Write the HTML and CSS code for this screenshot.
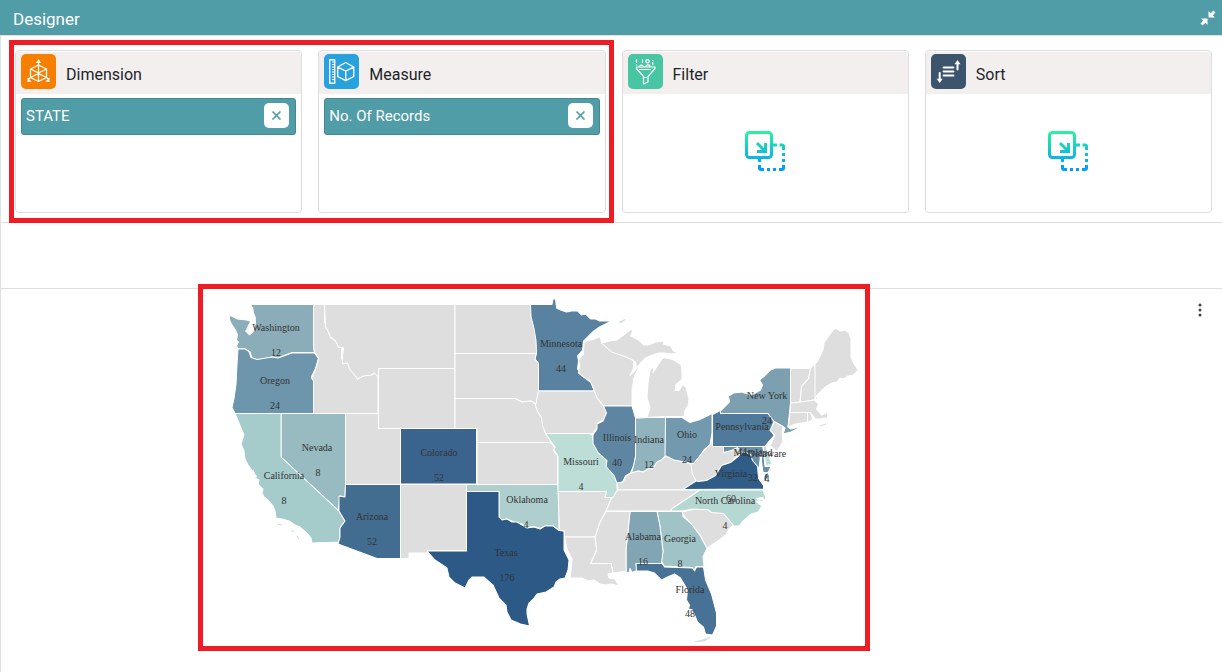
FILE: index.html
```html
<!DOCTYPE html>
<html lang="en">
<head>
<meta charset="utf-8">
<meta name="viewport" content="width=device-width, initial-scale=1">
<title>Designer</title>
<link rel="stylesheet" href="styles.css">
</head>
<body>
<header class="topbar">
  <h1 class="topbar-title">Designer</h1>
  <button class="topbar-btn" type="button" aria-label="Exit full screen">
    <svg width="16" height="16" viewBox="0 0 16 16"><g fill="#fff"><path d="M8.500 7.500V1l2.200 2.200L13.500 .500 15.500 2.500 12.800 5.300 15 7.500z"/><path d="M7.500 8.500V15L5.300 12.800 2.500 15.500 .500 13.500 3.200 10.700 1 8.500z"/></g></svg>
  </button>
</header>
<main class="page">
  <section class="shelves">
    <div class="marked">
      <article class="card">
        <div class="card-head">
          <svg class="card-icon" viewBox="0 0 35 35"><rect width="35" height="35" rx="5" fill="#f77f00"/><g fill="none" stroke="#fff" stroke-width="1.300" stroke-linejoin="round"><path d="M17.500 11l8 4v8.500l-8 4-8-4V15z"/><path d="M9.500 15l8 4 8-4M17.500 7v20.500M9.500 23.500l8-4 8 4"/><path d="M9.500 23.500L7 25.500M25.500 23.500l2.500 2"/></g><path d="M17.500 5l2.500 4h-5zM6.500 23.500v4.500l4-.500zM28.500 23.500v4.500l-4-.500z" fill="#fff"/></svg>
          <h2 class="card-title">Dimension</h2>
        </div>
        <div class="card-body">
          <div class="pill"><span>STATE</span><button class="pill-close" type="button" aria-label="Remove STATE"><svg width="11" height="11" viewBox="0 0 11 11"><path d="M1.500 1.500l8 8M9.500 1.500l-8 8" stroke="#509ca7" stroke-width="1.700"/></svg></button></div>
        </div>
      </article>
      <article class="card">
        <div class="card-head">
          <svg class="card-icon" viewBox="0 0 35 35"><rect width="35" height="35" rx="5" fill="#28a2dc"/><g fill="none" stroke="#fff" stroke-width="1.400" stroke-linejoin="round"><path d="M5.700 5.700h5v23.600h-5z"/><path d="M8 8h2.500M8 10.500h2.500M8 13h2.500M8 15.500h2.500M8 18h2.500M8 20.500h2.500M8 23h2.500M8 25.500h2.500" stroke-width="1.100"/><path d="M21.700 8.500l8 4.500v9.500l-8 4.200-8-4.200V13zM13.700 13l8 4.200 8-4.200M21.700 17.200v9.500"/></g></svg>
          <h2 class="card-title">Measure</h2>
        </div>
        <div class="card-body">
          <div class="pill"><span>No. Of Records</span><button class="pill-close" type="button" aria-label="Remove No. Of Records"><svg width="11" height="11" viewBox="0 0 11 11"><path d="M1.500 1.500l8 8M9.500 1.500l-8 8" stroke="#509ca7" stroke-width="1.700"/></svg></button></div>
        </div>
      </article>
    </div>
    <article class="card">
      <div class="card-head">
        <svg class="card-icon" viewBox="0 0 35 35"><rect width="35" height="35" rx="5" fill="#48c5a2"/><g fill="none" stroke="#fff" stroke-width="1.200" stroke-linejoin="round"><path d="M8.500 13h18.500v1.500L20 22.500v5.500l-4.500 2V22.500L8.500 14.500z"/><path d="M11 15.500h12M16 23.500h3"/><circle cx="19.500" cy="7.300" r="1.700"/><path d="M11.500 13a1.900 1.900 0 013.800 0M17.800 13a2.200 2.200 0 014.400 0M8.500 5v4M8.500 10.500v1M14.500 5.500V9M24.800 6v1M24.800 8v3"/></g></svg>
        <h2 class="card-title">Filter</h2>
      </div>
      <div class="card-body drop">
        <svg width="41" height="41" viewBox="0 0 41 41"><defs><linearGradient id="g1" gradientUnits="userSpaceOnUse" x1="0" y1="0" x2="0" y2="41"><stop offset="0" stop-color="#2af598"/><stop offset=".9" stop-color="#009efd"/></linearGradient></defs><g fill="none" stroke="url(#g1)" stroke-width="3"><rect x="1.500" y="1.500" width="25" height="25" rx="3"/><path d="M28 14h4M34.500 14H37q1.500 0 1.500 1.500V19M38.500 22v3M38.500 28v3M38.500 34v3q0 1.500-1.500 1.500H34M31 38.500h-3M25 38.500h-3M19 38.500h-3q-1.500 0-1.500-1.500V34M14.500 31v-3.500"/><path d="M12 12l7 7M20.500 12v8.500H12"/></g></svg>
      </div>
    </article>
    <article class="card">
      <div class="card-head">
        <svg class="card-icon" viewBox="0 0 35 35"><rect width="35" height="35" rx="5" fill="#3c556c"/><g fill="none" stroke="#fff" stroke-width="1.800" stroke-linecap="round"><path d="M12.500 13.500h10M12.500 17.500h10M12.500 21.500h10"/><path d="M26.500 15.500V9M8.700 19v7" stroke-width="2"/></g><path d="M26.500 6l3 4.200h-6zM8.700 29l-3-4.200h6z" fill="#fff"/></svg>
        <h2 class="card-title">Sort</h2>
      </div>
      <div class="card-body drop">
        <svg width="41" height="41" viewBox="0 0 41 41"><g fill="none" stroke="url(#g1)" stroke-width="3"><rect x="1.500" y="1.500" width="25" height="25" rx="3"/><path d="M28 14h4M34.500 14H37q1.500 0 1.500 1.500V19M38.500 22v3M38.500 28v3M38.500 34v3q0 1.500-1.500 1.500H34M31 38.500h-3M25 38.500h-3M19 38.500h-3q-1.500 0-1.500-1.500V34M14.500 31v-3.500"/><path d="M12 12l7 7M20.500 12v8.500H12"/></g></svg>
      </div>
    </article>
  </section>
  <section class="strip"></section>
  <section class="chart">
    <figure class="map-frame">
      <svg class="map" viewBox="203 289 662 357" role="img" aria-label="Number of records by state">
        <g class="states">
          <path fill="#8badb9" d="M251 304.500H313.500V346l1 6.500H292l-5 2-9 3.500-6-1-6 1.500-9 1.500-5-2-2-6-5-3h-7l-1.500-3 2-4-2-2 1-5-2-5-4-6-2-4v-5l8 4 9 1 4 1-1 6-4 4 4 4 4-4 2-9-3-8z"/>
          <path fill="#6d95ab" d="M238 349h7l4 2.500 2 6 6 2 9-1.500 6-1 6 1 14-5H314.500l4 5.500-3 10-4 8 2 3V413.500H235l-3-6 2-9 2-14 1-20z"/>
          <path d="M313.500 304.500h11V322l2 3 3 7 5 4 3 6 5 1-1 8v8l5-1 2 6 5 6 3 4 6-3 8-1 3-2 4.500 4V413.500H313.500V381l-2-3 4-8 3-12-4-5.500-1-6.500z"/>
          <path d="M324.500 304.500H455V368.500H378.500V377l-4-4-3 2-8 1-6 3-3-4-5-6-2-6-5 1v-8l1-8-5-1-3-6-5-4-3-7-2-3z"/>
          <path d="M378.500 368.500H455V428.500H378.500z"/>
          <path d="M345.500 413.500h33v15h22v56h-55z"/>
          <path fill="#3a648d" d="M400.500 428.500h76v55.500h-76z"/>
          <path fill="#98bac1" d="M281 413.500h64.500V484.500L345 497l-5-1-1.500 15L281 457z"/>
          <path fill="#a6cbcb" d="M235 413.500h46V457l58 54 6 10-5 7 0 9 1 5-29 1-1-5-4-5-7-6-5-2-6-4-7-2-6-1-1-7-2-5-4-5-5-4-2-4 1-4-5-5 1-4-4-2-1-5-6-8-3-6-1-8-3-7 3-9z"/>
          <path fill="#436c91" d="M345.500 484.500h55v74H377L338 544l2-7v-9l5-7-6-10v-15l6 1z"/>
          <path d="M400.500 484.500h66v66H428v2.500h-19v5.500h-8.500z"/>
          <path d="M455 304.500h75.500l1 12 3 12 2 12 .5 13H455z"/>
          <path d="M455 353.500h81.500l-1.500 5.500 3.500 4V391l-1 7-.5 7-6-4-9 1-7-3.500H455z"/>
          <path d="M455 398.500h60l7 3.500 9-1 6 4 3 7 3 5 1 8 3 8 4 9.500h-74v-14h-22z"/>
          <path d="M477 442.500h73.500l4 5-1 3 4 5.500V484.500H477z"/>
          <path fill="#aecfcd" d="M466.500 484.500h91.500l1 16V530l-6-4-8 0-5 2.500-6-2-7 1-5-3.500-5 0-5-3-5-2-5 1-3-3V491.500H466.500z"/>
          <path fill="#2c5985" d="M466.500 491.500H499V517l3 3 5-1 5 3 5 0 5 3 5 3 7-1 6 2 5-3h8l6 4.500 5 .500V550l5 10-1 10-3 8-5 1-4 3-2 5-8 5-9 2-3 4-5 5-2 6 0 5 2.500 12-9-2-9.500-4-4-8-1-7-7-7-6-13-9-8H472l-3 3-4 8-10-5-6-6-2-9-12-8-8-9h39.500z"/>
          <path fill="#5982a0" d="M530.500 304.500H552l1-5.500h2.500l1 9 4 2 6 2 5-1 6 0 4 4 4-1 5 5 5 0 4 2 12 0-12 6-7 5-9 9-1 9-5 6 1 5-1 8 5 4 7 5L594.500 391H538.500V363l-3.500-4 1.500-5.500-.5-13-2-12-3-12z"/>
          <path d="M538.500 391h56l2 6 4 5 5 4 1.500 6-3.500 8-6 3 0 4-5 6.500-47 0-3-8-1-8-4-6-2-6z"/>
          <path d="M584 341.500l9-2 7-3 2 7 9 4 12 4 7 3 4 7-1 8-3 6 5-5 8-15-5 13-4 9-2 12v16.500H603.500L597 398l-2.500-7-4-9-7-5-5-4 1-8-1-5 5-6z"/>
          <path d="M601.500 343l8-2 7-1 7-5 8-6 1 3-2 4 8 4 5 5 5 0 7-3 8-1 0 3 7 2 3 5 5 2-7 1-7-1-6 0-6 2-7 3-5 5-4 5-1-6-5-3-7-3-12-4z"/>
          <path d="M647 417.500l3-10-3-10 1-14 2-13 4-5-1 7 6-9 4-6 10 2 8 5 1 7 0 8-6 5-1 6 4 0 4-6 3 3 3 12-1 6-3 5-1 6H665z"/>
          <path fill="#5e86a3" d="M603.500 406H632l3.500 12V456l-2 10-3 7-5 3-3 6-6 2-3-8-8-9 1-6-9-8-5-9 .500-9 4-6v-5l6-3 3.500-8z"/>
          <path fill="#90b3bd" d="M635.500 418h4l8-.500H665.500V456l-5 5-4 2-3 5-5 1-5 3-5-1-7 2 2-7 2-9z"/>
          <path fill="#7299ad" d="M665.500 417.500H682l8 5 10-3 12-6V433l-2 12-6 5-5 8-6 6-10-2-10-2-8-4z"/>
          <path fill="#4f7a9b" d="M712.500 414.500l8-4v3H768l6 8-3 9 3 5-6 7-3 4H712.500z"/>
          <path fill="#7ca0b0" d="M720.500 411l9-9-1-6 5-3 8-1 10 3 9-5 2-5-3-5 5-4 6-6 5-2H790.500V403L788 427l3 2 12-3-12 6-8 2 2-6-11-6.500-6-8H720.500z"/>
          <path d="M774 421.500l9 5-1 6 1 9-6 10-7-6 5-10-5-5z"/>
          <path d="M790.500 368.500h20l-2 10-7 8-1.500 16H790.500z"/>
          <path d="M810.500 368.500l4.500-5 1.500 30 1 6-17.500 3 1.500-16 7-8z"/>
          <path d="M815 364l2-2 6-12 1-7 4-6 5-7 3-2 4 3 5-1 4 3 2 6 0 18 3 7 4 6-5 5-5 1-4 3-4-1-3 4-5 1-5 3-4 3-6 6-2 5z"/>
          <path d="M790.500 403l10-1 14-2 4 4-2 5 5 6 6-3 0 6-7 1-5 0-5-6H790z"/>
          <path d="M790 412.500h17.500V422l-12 2-7.500 3z"/><path d="M807.500 412.500l3 0 2.500 7-5.500 3z"/>
          <path fill="#6890a8" d="M723.500 446.500H763l2 20 6 0-3 6-5 0-2-14-3 12-5-8-6-9-7 0-5 4-3-6-9 4z"/>
          <path fill="#bcded7" d="M763 447l3-1 3 10 3 8-6 2z"/>
          <path d="M712 434l.500 12.500h11v6l8-2 6-3 4 4-11 11-9 3-6 10-9 5-10 2-7-10-1-9 5 0 5-6 6-8 6-5z"/>
          <path fill="#305d88" d="M681.500 489.500l13-9 4 1 8-1 9-5 6-10 9-3 10-8 3-3 7 3 2 6 5 6 1 12 5 7 0 3.500zM769 472l-3 9-4 1 3-8z"/>
          <path d="M618 490l-1-7 6-1 3-6 5-3 7-2 5 1 5-3 5-1 4-6 4-2 5-4 8 4 10 2 7 2 1 9 4 8-14 9z"/>
          <path d="M613 493l5-3 82 0-12 8-15 10-3 3H606l5-12z"/>
          <path fill="#b6d8d3" d="M700 490h63l3 8-3 4-7-1 6 5-4 6-7 2-8 7-4 5-6 0-10-12-12-1-4-3-14-1-11 2H670l3-3 15-10z"/>
          <path d="M681.500 512l12-2.500h14l4 3 12 1 10 12-5 4-2 5-8 6-12 8-6-13-11-13z"/>
          <path fill="#9fc3c7" d="M657 511.500h25l1 5 8 7 9 12 7 13-4 8 1 10h-8l-2 4-2-3-28-1.500-2.500-5 1.500-10-3-25z"/>
          <path fill="#82a5b4" d="M630 511.500h27l3 15 3 25-1.500 12H636l1 7-5 2-2-4-1 4h-3L626 550z"/>
          <path d="M606 511.500h24L626 550v21.500l-13 1.500-2-9.500H590.500l6-13-1.500-14 5-15z"/>
          <path d="M558 491.500h49l-2 6h6.500L606 511l-6 11-5 15H564.500V531l-5-1z"/>
          <path d="M564.500 537H595l1.500 13-6 13.500H611l2 9.500-5 1 1 4 6 1 4 7-8-2-5 1-6-1-6-4-6 1-6-3-6 0-6 0 1-8 1-11-5-10z"/>
          <path fill="#bcded7" d="M545.500 433.500H590l2.500 2 .500 8 5 9 9 8-1 6 8 9 3 8 0 7-4 7-8 0 1.500-6H558V456l-4-6 1-3z"/>
          <path fill="#487295" d="M636 563.500h26l2.500 3.500 28 1 2 3 2-4h7l2 13 6 14 5 19 0 13-4 9-7-1-2-7-6-5-5-12-4-1 1-4-3-5 1-10-7-12-6-4-7 3-6 3-7-7-7-2-11 0z"/>
        </g>
        <path class="water" d="M249 306l4 1 1 6 2 5-1 8-3 8h-3l-2-3 3-4-4 2 4-7 2-5-2-5zM253 469l2 5 2 2-1 2-3-3zM760 453l2 1 0 12 2 9 1 8-3-4-3-12zM763 497l-7 1 2 3 5-1-5 4 4 2 4-4z"/>
        <g class="islands"><path d="M619 322.500l6-3-3 2.500zM695 641.500l6-1 9-3-6 3.500zM277 524l5 1M291 530l3 2M297 536l2 3M820 426l6-2"/></g>
        <g class="labels">
          <text x="276" y="331">Washington</text><text x="276" y="356">12</text>
          <text x="275" y="384">Oregon</text><text x="275" y="409">24</text>
          <text x="284" y="479">California</text><text x="284" y="504">8</text>
          <text x="317" y="451">Nevada</text><text x="318" y="476">8</text>
          <text x="372" y="520">Arizona</text><text x="372" y="545">52</text>
          <text x="439" y="456">Colorado</text><text x="439" y="481">52</text>
          <text x="506" y="556">Texas</text><text x="507" y="581">176</text>
          <text x="527" y="503">Oklahoma</text><text x="526" y="528">4</text>
          <text x="581" y="465">Missouri</text><text x="581" y="490">4</text>
          <text x="561" y="347">Minnesota</text><text x="561" y="372">44</text>
          <text x="617" y="441">Illinois</text><text x="617" y="466">40</text>
          <text x="649" y="443">Indiana</text><text x="649" y="468">12</text>
          <text x="687" y="438">Ohio</text><text x="687" y="463">24</text>
          <text x="742" y="430">Pennsylvania</text><text x="742" y="455">44</text>
          <text x="767" y="399">New York</text><text x="767" y="424">24</text>
          <text x="753" y="456">Maryland</text><text x="753" y="481">32</text>
          <text x="767" y="457">Delaware</text><text x="767" y="482">4</text>
          <text x="731" y="477">Virginia</text><text x="731" y="502">60</text>
          <text x="725" y="504">North Carolina</text><text x="725" y="529">4</text>
          <text x="643" y="540">Alabama</text><text x="643" y="565">16</text>
          <text x="680" y="542">Georgia</text><text x="680" y="567">8</text>
          <text x="690" y="593">Florida</text><text x="690" y="617">48</text>
        </g>
      </svg>
    </figure>
    <button class="more" type="button" aria-label="More options"><svg width="4" height="14" viewBox="0 0 4 14"><g fill="#444"><circle cx="2" cy="2" r="1.500"/><circle cx="2" cy="7" r="1.500"/><circle cx="2" cy="12" r="1.500"/></g></svg></button>
  </section>
</main>
</body>
</html>
```
FILE: styles.css
```css
* { box-sizing: border-box; }

body {
  margin: 0;
  min-height: 100vh;
  display: flex;
  flex-direction: column;
  background: #fff;
  color: #212529;
  font-family: Roboto, "Liberation Sans", sans-serif;
  font-size: 16px;
}

h1, h2, figure { margin: 0; }

button {
  display: flex;
  align-items: center;
  justify-content: center;
  padding: 0;
  border: 0;
  background: none;
  cursor: pointer;
}

svg { display: block; }

.topbar {
  display: flex;
  align-items: center;
  justify-content: space-between;
  height: 36px;
  padding: 0 6px 0 13px;
  border-bottom: 1px solid #dee2e6;
  background: #509ca7;
  background-clip: padding-box;
  color: #fff;
}

.topbar-title { font-size: 17px; font-weight: 400; line-height: 24px; padding-top: 2px; }

.page {
  flex: 1;
  display: flex;
  flex-direction: column;
  border-left: 1px solid #dee0e2;
}

.shelves {
  display: grid;
  grid-template-columns: repeat(4, 1fr);
  gap: 16px;
  padding: 14px 10px 9px 14px;
  border-bottom: 1px solid #dedede;
}

.marked {
  position: relative;
  grid-column: span 2;
  display: grid;
  grid-template-columns: 1fr 1fr;
  gap: 16px;
}

.marked::after {
  content: "";
  position: absolute;
  inset: -10px -8px -10px -6px;
  border: 5px solid #ee1c25;
  pointer-events: none;
}

.card {
  display: flex;
  flex-direction: column;
  min-height: 163px;
  padding-top: 1px;
  border: 1px solid #dedede;
  border-radius: 4px;
}

.card-head {
  display: flex;
  align-items: center;
  gap: 10px;
  height: 42px;
  padding: 0 5px 3px;
  background: #f3efee;
}

.card-icon { width: 35px; height: 35px; }

.card-title { font-size: 16px; font-weight: 400; line-height: 20px; padding-top: 6px; }

.card-body { flex: 1; padding: 4px 5px; }

.drop {
  display: flex;
  align-items: center;
  justify-content: center;
  padding-bottom: 8px;
}

.pill {
  display: flex;
  align-items: center;
  justify-content: space-between;
  height: 37px;
  padding: 0 6px 2px 4px;
  border: 1px solid #428891;
  border-radius: 3px;
  background: #509ca7;
  color: #fff;
  font-size: 15px;
}

.pill-close {
  width: 25px;
  height: 25px;
  border-radius: 5px;
  background: #fff;
}

.strip { height: 66px; border-bottom: 1px solid #dedede; }

.chart {
  flex: 1;
  display: flex;
  align-items: flex-start;
  justify-content: space-between;
  padding: 0 19px 0 197px;
}

.map-frame {
  width: 66.87%;
  margin-top: -5px;
  border: 5px solid #ee1c25;
  background: #fff;
}

.map { width: 100%; height: auto; }

.states { fill: #dedede; stroke: #fff; stroke-width: 1; stroke-linejoin: round; }

.water { fill: #fff; }

.islands { fill: #dedede; stroke: #d5dfe0; stroke-width: 1; }

.labels {
  fill: #333;
  font-family: "Liberation Serif", serif;
  font-size: 10px;
  text-anchor: middle;
}

.more { width: 6px; height: 20px; margin-top: 11px; }
```
